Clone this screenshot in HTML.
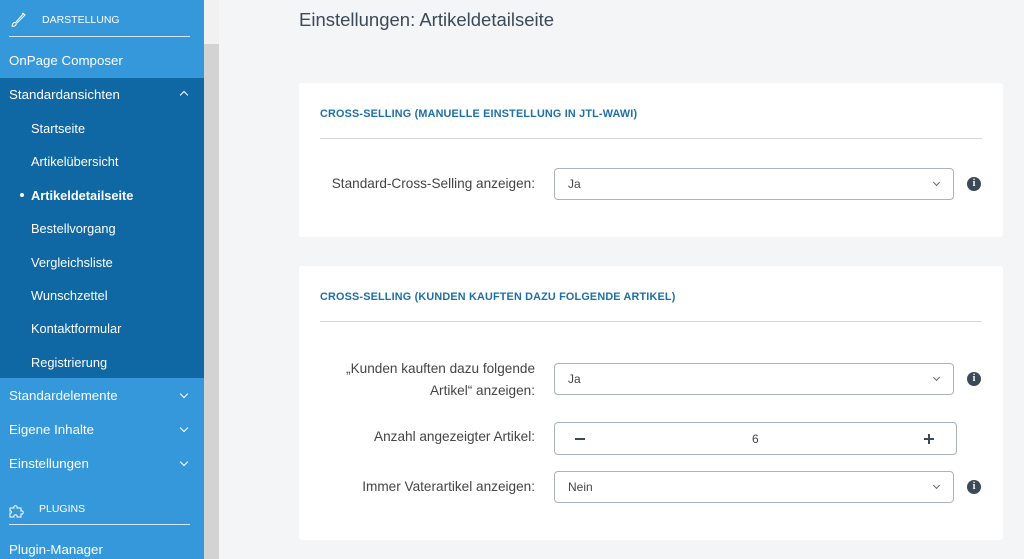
<!DOCTYPE html><html><head><style>
body{margin:0;width:1024px;height:559px;overflow:hidden;background:#f3f5f7;font-family:"Liberation Sans",sans-serif;position:relative}
.sb{position:absolute;left:0;top:0;width:204px;height:559px;background:#3498db;color:#fff}
.scr{position:absolute;left:204px;top:0;width:15px;height:559px;background:#d3d3d3}
.scr div{height:44px;background:#f1f1f1}
.it{position:absolute;left:9px;font-size:13.3px}
.sub{position:absolute;left:31px;font-size:12.8px}
.dark{position:absolute;left:0;top:78px;width:204px;height:300px;background:#0f67a3}
.chev{position:absolute;left:181px;width:5px;height:5px;border-right:1.5px solid #fff;border-bottom:1.5px solid #fff}
.hd{position:absolute;font-size:10.5px;left:42px}
.ln{position:absolute;left:9px;width:181px;height:1px;background:#cfe6f7}
.card{position:absolute;left:299px;width:704px;background:#fff;border-radius:3px}
.ct{position:absolute;left:21px;font-size:10.8px;font-weight:bold;color:#1d6fa8;letter-spacing:.2px}
.hr{position:absolute;left:21px;width:662px;height:1px;background:#d6d6d6}
.lab{position:absolute;right:468px;font-size:13.6px;color:#444;text-align:right;white-space:nowrap}
.sel{position:absolute;left:255px;width:400px;height:32px;border:1px solid #aab2ba;border-radius:4px;box-sizing:border-box;font-size:12px;color:#444;padding:8px 13px}
.sel:after{content:"";position:absolute;right:14px;top:11px;width:4px;height:4px;border-right:1px solid #666;border-bottom:1px solid #666;transform:rotate(45deg)}
.info{position:absolute;left:668px;width:14px;height:14px;border-radius:50%;background:#3c4a57;color:#fff;font-size:10px;font-weight:bold;text-align:center;line-height:14px;font-family:"Liberation Serif",serif}
</style></head><body>
<div class="sb">
<div class="dark"></div>
<svg style="position:absolute;left:10px;top:12px" width="16" height="16" viewBox="0 0 16 16"><path d="M14 1 L6 10 M12 1 L15 3 L7 11 M2 14 C3 10 5 10 6 11 C7 13 4 15 2 14Z" stroke="#fff" fill="none" stroke-width="1"/></svg>
<div class="hd" style="top:14px">DARSTELLUNG</div>
<div class="ln" style="top:36px"></div>
<div class="it" style="top:53px">OnPage Composer</div>
<div class="it" style="top:87px">Standardansichten</div>
<div class="chev" style="top:92px;transform:rotate(-135deg)"></div>
<div class="sub" style="top:121px">Startseite</div>
<div class="sub" style="top:154px">Artikelübersicht</div>
<div style="position:absolute;left:20px;top:193px;width:4px;height:4px;border-radius:50%;background:#fff"></div>
<div class="sub" style="top:188px;font-weight:bold">Artikeldetailseite</div>
<div class="sub" style="top:221px">Bestellvorgang</div>
<div class="sub" style="top:255px">Vergleichsliste</div>
<div class="sub" style="top:288px">Wunschzettel</div>
<div class="sub" style="top:321px">Kontaktformular</div>
<div class="sub" style="top:355px">Registrierung</div>
<div class="it" style="top:388px">Standardelemente</div>
<div class="chev" style="top:391px;transform:rotate(45deg)"></div>
<div class="it" style="top:422px">Eigene Inhalte</div>
<div class="chev" style="top:425px;transform:rotate(45deg)"></div>
<div class="it" style="top:456px">Einstellungen</div>
<div class="chev" style="top:459px;transform:rotate(45deg)"></div>
<svg style="position:absolute;left:9px;top:502px" width="17" height="17" viewBox="0 0 17 17"><path d="M1 6 H5 C4 3 9 3 8 6 H12 V9 C15 8 15 13 12 12 V15 H8 C9 12 4 12 5 15 H1 V11 C3 12 3 8 1 9Z" stroke="#fff" fill="none" stroke-width="1"/></svg>
<div class="hd" style="top:503px;left:39px">PLUGINS</div>
<div class="ln" style="top:524px"></div>
<div class="it" style="top:542px">Plugin-Manager</div>
</div>
<div class="scr"><div></div></div>
<div style="position:absolute;left:299px;top:9px;font-size:18.5px;color:#3c4a57">Einstellungen: Artikeldetailseite</div>
<div class="card" style="top:83px;height:154px">
<div class="ct" style="top:25px">CROSS-SELLING (MANUELLE EINSTELLUNG IN JTL-WAWI)</div>
<div class="hr" style="top:55px"></div>
<div class="lab" style="top:93px">Standard-Cross-Selling anzeigen:</div>
<div class="sel" style="top:85px">Ja</div>
<div class="info" style="top:94px">i</div>
</div>
<div class="card" style="top:266px;height:274px">
<div class="ct" style="top:25px">CROSS-SELLING (KUNDEN KAUFTEN DAZU FOLGENDE ARTIKEL)</div>
<div class="hr" style="top:55px"></div>
<div class="lab" style="top:92px;line-height:22px">„Kunden kauften dazu folgende<br>Artikel“ anzeigen:</div>
<div class="sel" style="top:97px">Ja</div>
<div class="info" style="top:106px">i</div>
<div class="lab" style="top:163px">Anzahl angezeigter Artikel:</div>
<div style="position:absolute;left:255px;top:156px;width:403px;height:33px;border:1px solid #aab2ba;border-radius:4px;box-sizing:border-box;font-size:12px;color:#444">
<div style="position:absolute;left:20px;top:15px;width:10px;height:2px;background:#3c4a57"></div>
<div style="position:absolute;left:197px;top:9px">6</div>
<div style="position:absolute;left:369px;top:15px;width:10px;height:2px;background:#3c4a57"></div>
<div style="position:absolute;left:373px;top:11px;width:2px;height:10px;background:#3c4a57"></div>
</div>
<div class="lab" style="top:213px">Immer Vaterartikel anzeigen:</div>
<div class="sel" style="top:205px">Nein</div>
<div class="info" style="top:214px">i</div>
</div>
</body></html>
